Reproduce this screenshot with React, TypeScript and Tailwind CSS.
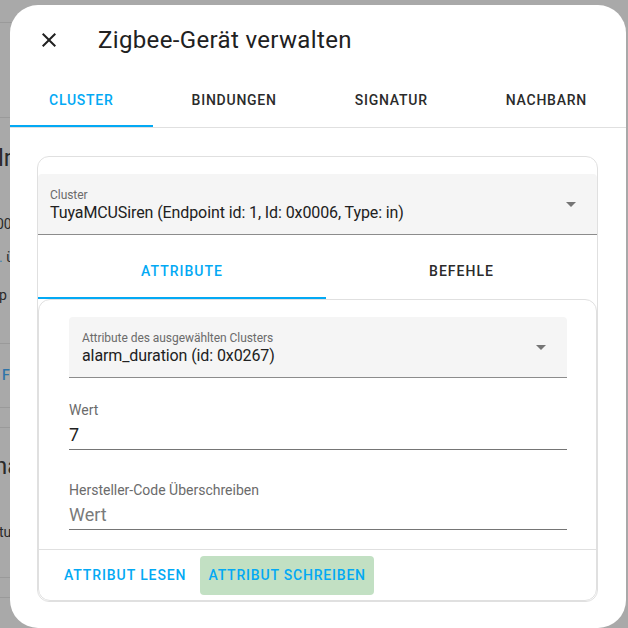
import React from "react";

function CloseIcon() {
  return (
    <svg width="24" height="24" viewBox="0 0 24 24">
      <path
        d="M19,6.41L17.59,5L12,10.59L6.41,5L5,6.41L10.59,12L5,17.59L6.41,19L12,13.41L17.59,19L19,17.59L13.41,12L19,6.41Z"
        fill="#212121"
      />
    </svg>
  );
}

function Arrow() {
  return (
    <svg width="10" height="5" viewBox="0 0 10 5">
      <path d="M0 0L5 5L10 0Z" fill="#757575" />
    </svg>
  );
}

function SelectField({ label, value, pl }: { label: string; value: string; pl: string }) {
  return (
    <div className={`h-[61px] bg-[#f5f5f5] rounded-t-[4px] border-b border-[#8c8c8c] flex items-center justify-between pr-[21px] ${pl}`}>
      <div className="flex flex-col self-start pt-[14px]">
        <div className="text-[12px] leading-[14px] text-[#6b6b6b] tracking-[-0.05px]">{label}</div>
        <div className="mt-[1px] text-[16px] leading-[20px] text-[#212121] tracking-[-0.1px]">{value}</div>
      </div>
      <Arrow />
    </div>
  );
}

function BgLine() {
  return <div className="h-px bg-[#9a9a9a]" />;
}

export default function App() {
  const mainTabs = ["Cluster", "Bindungen", "Signatur", "Nachbarn"];
  return (
    <div className="relative w-[628px] h-[628px] overflow-hidden bg-[#a9a9a9] font-[Roboto,sans-serif]">
      {/* background page (dimmed) */}
      <div className="flex flex-col w-[40px] text-[#2a2a2a]">
        <div className="h-[22px]" />
        <BgLine />
        <div className="h-[94px]" />
        <BgLine />
        <div className="h-[22px]" />
        <div className="h-[36px] text-[24px] leading-[36px] -ml-[2px]">lr</div>
        <div className="h-[38px]" />
        <div className="h-[20px] text-[14px] leading-[20px] -ml-[4px]">00</div>
        <div className="h-[14px]" />
        <div className="h-[18px] text-[14px] leading-[18px] -ml-[1px]">
          <span className="text-[#3a7fb0]">.</span> ü
        </div>
        <div className="h-[20px]" />
        <div className="h-[18px] text-[14px] leading-[18px] -ml-[1px]">p</div>
        <div className="h-[39px]" />
        <BgLine />
        <div className="h-[22px]" />
        <div className="h-[18px] text-[14px] leading-[18px] text-[#2f74a8] font-medium ml-[2px]">F</div>
        <div className="h-[23px]" />
        <BgLine />
        <div className="h-[19px]" />
        <BgLine />
        <div className="h-[22px]" />
        <div className="h-[32px] text-[24px] leading-[32px] -ml-[6px]">na</div>
        <div className="h-[41px]" />
        <div className="h-[18px] text-[14px] leading-[18px] -ml-[1px]">tu</div>
        <div className="h-[36px]" />
        <BgLine />
        <div className="h-[19px]" />
        <BgLine />
      </div>

      {/* dialog */}
      <div className="absolute left-[10px] top-[5px] w-[616px] h-[623px] rounded-[28px] bg-white flex flex-col overflow-hidden">
        <div className="h-[70px] flex items-center pl-[27px] shrink-0">
          <CloseIcon />
          <div className="ml-[37px] text-[24px] leading-[28px] tracking-[0.35px] text-[#212121]">Zigbee-Gerät verwalten</div>
        </div>

        <div className="flex border-b border-[#e0e0e0] shrink-0">
          {mainTabs.map((t, i) => (
            <div
              key={t}
              className={`flex-auto h-[52px] flex items-center justify-center border-b-2 uppercase text-[14px] font-medium tracking-[0.75px] ${
                i === 0 ? "border-[#03a9f4] text-[#03a9f4]" : "border-transparent text-[#2b2b2b]"
              }`}
            >
              {t}
            </div>
          ))}
        </div>

        <div className="pl-[27px] pt-[28px]">
          <div className="w-[561px] border border-[#e0e0e0] rounded-[12px] flex flex-col pt-[17px]">
            <SelectField
              label="Cluster"
              value="TuyaMCUSiren (Endpoint id: 1, Id: 0x0006, Type: in)"
              pl="pl-[12px]"
            />

            <div className="flex">
              <div className="flex-auto h-[64px] pt-[10px] flex items-center justify-center border-b-2 border-[#03a9f4] text-[#03a9f4] uppercase text-[14px] font-medium tracking-[1px]">
                Attribute
              </div>
              <div className="flex-auto h-[64px] pt-[10px] flex items-center justify-center border-b-2 border-transparent text-[#2b2b2b] uppercase text-[14px] font-medium tracking-[1px]">
                Befehle
              </div>
            </div>

            <div className="border border-[#e0e0e0] rounded-[12px] flex flex-col">
              <div className="pl-[30px] pr-[29px] pt-[17px] pb-[19px] flex flex-col">
                <SelectField
                  label="Attribute des ausgewählten Clusters"
                  value="alarm_duration (id: 0x0267)"
                  pl="pl-[13px]"
                />

                <div className="flex flex-col mt-[24px] pb-[2px] border-b border-[#757575]">
                  <div className="text-[14px] leading-[16px] text-[#6b6b6b]">Wert</div>
                  <div className="mt-[5px] text-[18px] leading-[24px] text-[#212121]">7</div>
                </div>

                <div className="flex flex-col mt-[32px] pb-[2px] border-b border-[#757575]">
                  <div className="text-[14px] leading-[16px] text-[#6b6b6b]">Hersteller-Code Überschreiben</div>
                  <div className="mt-[5px] text-[18px] leading-[24px] text-[#7a7a7a]">Wert</div>
                </div>
              </div>

              <div className="border-t border-[#e0e0e0] flex gap-[6px] pl-[17px] pt-[6px] pb-[5px]">
                <div className="h-[39px] px-[8px] rounded-[4px] flex items-center uppercase text-[14px] font-medium tracking-[0.9px] text-[#03a9f4]">
                  Attribut lesen
                </div>
                <div className="h-[39px] px-[8px] rounded-[4px] flex items-center uppercase text-[14px] font-medium tracking-[0.8px] text-[#03a9f4] bg-[#c2e0c3]">
                  Attribut schreiben
                </div>
              </div>
            </div>
          </div>
        </div>
      </div>
    </div>
  );
}
